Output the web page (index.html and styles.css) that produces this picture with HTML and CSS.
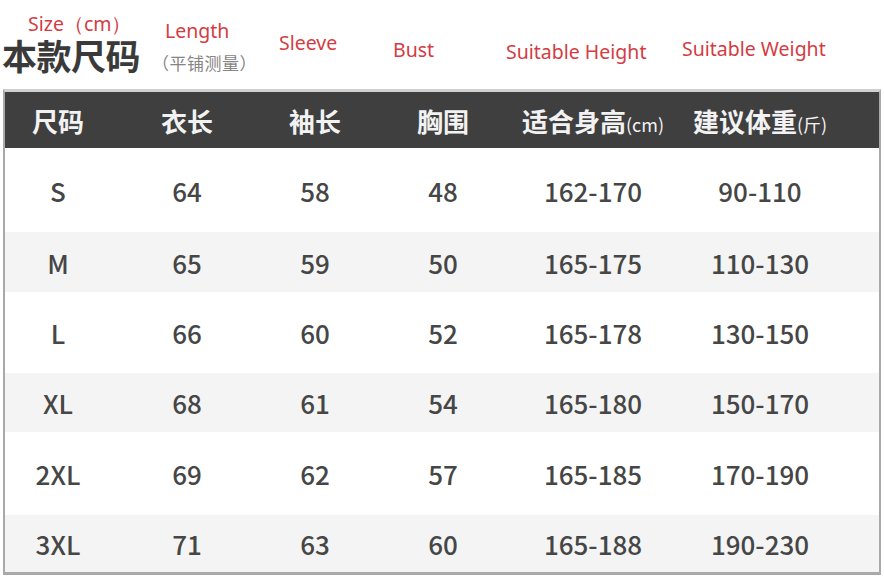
FILE: index.html
```html
<!DOCTYPE html>
<html lang="zh">
<head>
<meta charset="utf-8">
<title>本款尺码</title>
<link rel="stylesheet" href="styles.css">
</head>
<body>
<div class="top">
  <div class="title"><span class="title-main">本款尺码</span><span class="title-sub">（平铺测量）</span></div>
  <span class="note note-size">Size（cm）</span>
  <span class="note note-length">Length</span>
  <span class="note note-sleeve">Sleeve</span>
  <span class="note note-bust">Bust</span>
  <span class="note note-height">Suitable Height</span>
  <span class="note note-weight">Suitable Weight</span>
</div>
<div class="table">
  <div class="row head">
    <div class="cell">尺码</div>
    <div class="cell">衣长</div>
    <div class="cell">袖长</div>
    <div class="cell">胸围</div>
    <div class="cell">适合身高<small>(cm)</small></div>
    <div class="cell last">建议体重<small>(斤)</small></div>
  </div>
  <div class="row r1">
    <div class="cell">S</div><div class="cell">64</div><div class="cell">58</div><div class="cell">48</div><div class="cell">162-170</div><div class="cell last">90-110</div>
  </div>
  <div class="row r2 alt">
    <div class="cell">M</div><div class="cell">65</div><div class="cell">59</div><div class="cell">50</div><div class="cell">165-175</div><div class="cell last">110-130</div>
  </div>
  <div class="row r3">
    <div class="cell">L</div><div class="cell">66</div><div class="cell">60</div><div class="cell">52</div><div class="cell">165-178</div><div class="cell last">130-150</div>
  </div>
  <div class="row r4 alt">
    <div class="cell">XL</div><div class="cell">68</div><div class="cell">61</div><div class="cell">54</div><div class="cell">165-180</div><div class="cell last">150-170</div>
  </div>
  <div class="row r5">
    <div class="cell">2XL</div><div class="cell">69</div><div class="cell">62</div><div class="cell">57</div><div class="cell">165-185</div><div class="cell last">170-190</div>
  </div>
  <div class="row r6 alt">
    <div class="cell">3XL</div><div class="cell">71</div><div class="cell">63</div><div class="cell">60</div><div class="cell">165-188</div><div class="cell last">190-230</div>
  </div>
</div>
</body>
</html>
```

FILE: styles.css
```css
html, body {
  margin: 0;
  padding: 0;
  background: #ffffff;
}
body {
  width: 884px;
  height: 579px;
  overflow: hidden;
  font-family: "Noto Sans CJK SC", "Noto Sans", sans-serif;
}
.top {
  position: relative;
  height: 89px;
}
.title {
  display: flex;
  align-items: baseline;
  padding: 37px 0 0 2px;
  gap: 12px;
}
.title-main {
  font-size: 35px;
  line-height: 1;
  font-weight: 700;
  color: #3a3a3a;
  letter-spacing: -0.5px;
}
.title-sub {
  font-size: 17px;
  line-height: 1;
  color: #858585;
  letter-spacing: 0.5px;
}
.note {
  position: absolute;
  font-family: "Noto Sans", "Open Sans", sans-serif;
  font-size: 19.5px;
  line-height: 20px;
  color: #d43c42;
  white-space: nowrap;
}
.note-size { left: 28px; top: 14px; }
.note-length { left: 165px; top: 21px; }
.note-sleeve { left: 279px; top: 33px; }
.note-bust { left: 393px; top: 40px; }
.note-height { left: 506px; top: 42px; }
.note-weight { left: 682px; top: 39px; }

.table {
  margin-left: 3px;
  width: 874px;
  border: 2px solid #a9a9a9;
  border-top: 3px solid #d0d0d0;
  border-bottom-width: 3px;
  background: #ffffff;
}
.row {
  display: grid;
  grid-template-columns: 106px 152px 104px 152px 148px 1fr;
  align-items: center;
  font-size: 26px;
  font-weight: 500;
  color: #464646;
}
.cell {
  text-align: center;
  white-space: nowrap;
}
.cell.last {
  padding-right: 26px;
}
.head {
  height: 56px;
  background: #3f3f3f;
  color: #f2f2f2;
  font-size: 26px;
  font-weight: 700;
}
.head small {
  font-size: 18px;
  font-weight: 400;
}
.alt {
  background: #f4f4f4;
}
.r1 { height: 84px; }
.r2 { height: 60px; }
.r3 { height: 81px; }
.r4 { height: 59px; }
.r5 { height: 83px; }
.r6 { height: 57px; }
```
